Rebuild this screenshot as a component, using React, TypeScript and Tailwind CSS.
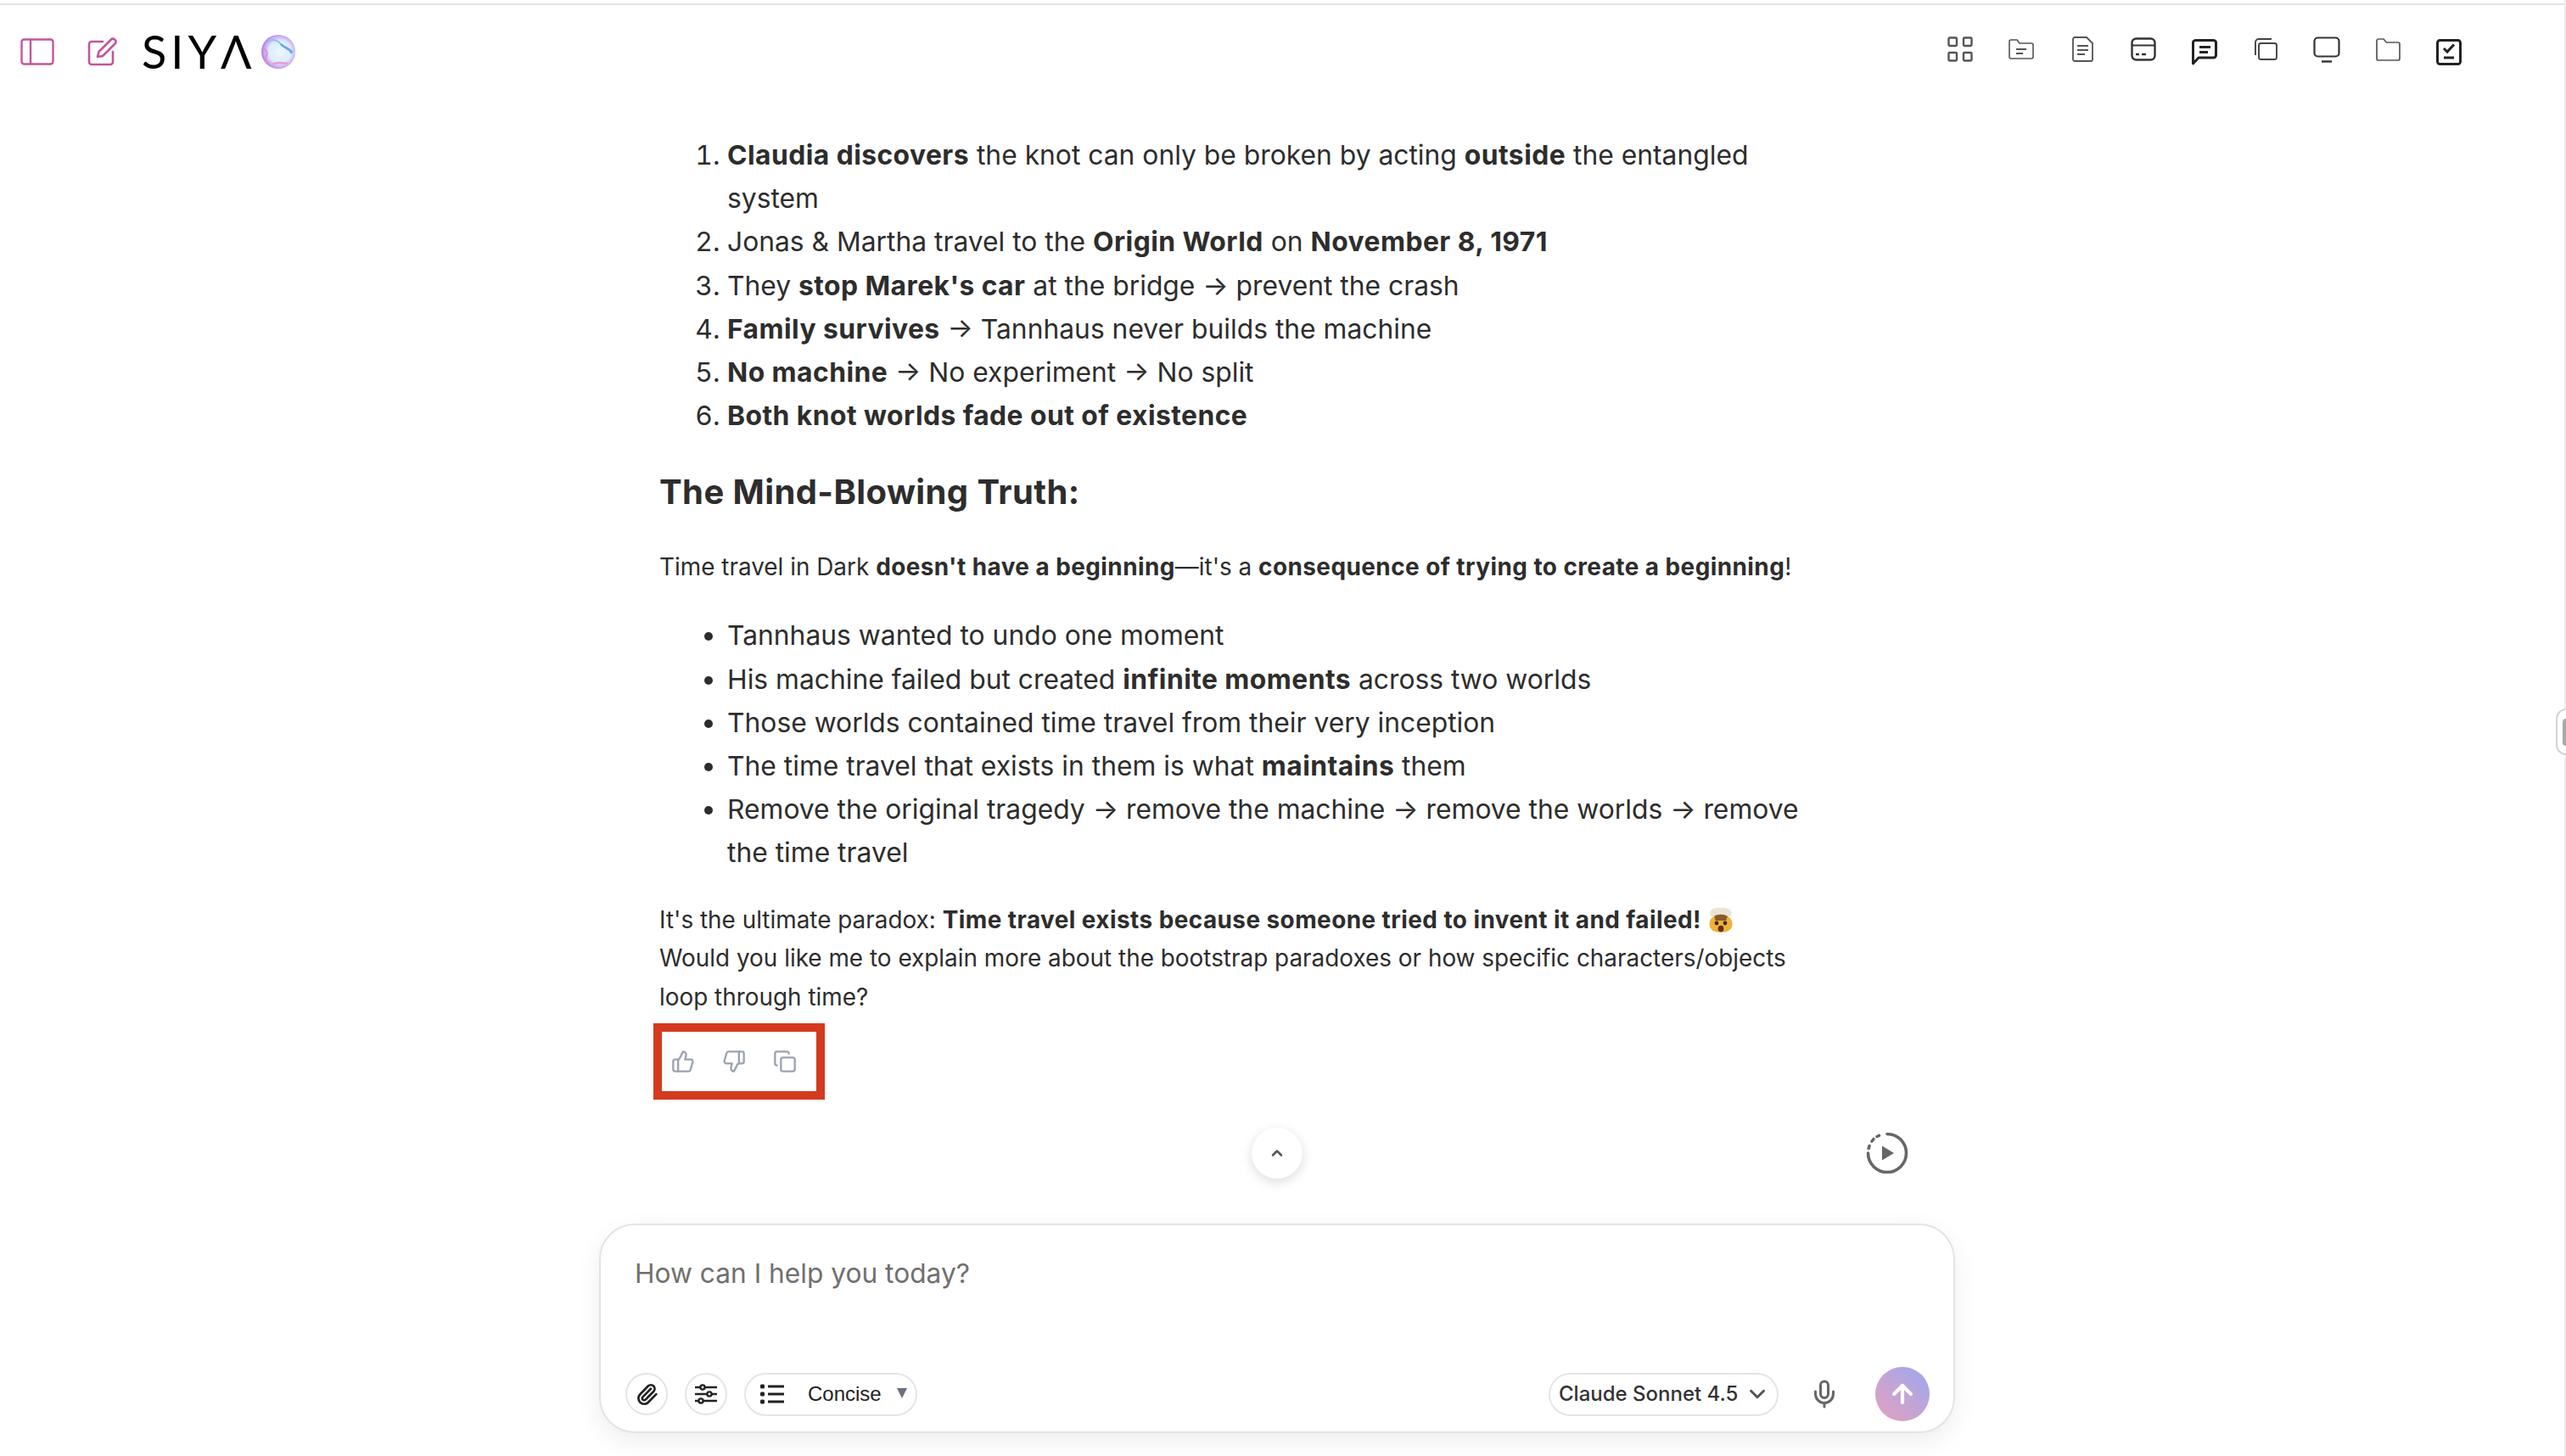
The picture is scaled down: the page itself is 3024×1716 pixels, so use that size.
import React from "react";
import { ThumbsUp, ThumbsDown, Copy, Mic, Paperclip, ArrowUp, ChevronUp, ChevronDown } from "lucide-react";

const SidebarIcon = () => (
  <svg width="40" height="32" viewBox="0 0 40 32" fill="none" stroke="#c2559b" strokeWidth="2.4">
    <rect x="1.5" y="1.5" width="37" height="29" rx="3" />
    <path d="M12 1.5v29" />
  </svg>
);
const EditIcon = () => (
  <svg width="36" height="34" viewBox="0 0 36 34" fill="none" stroke="#c2559b" strokeWidth="2.6" strokeLinejoin="round" strokeLinecap="round">
    <path d="M18 5H5a3 3 0 0 0-3 3v21a3 3 0 0 0 3 3h22a3 3 0 0 0 3-3V17" />
    <path d="M12 23l1.5-6L28 2.5a2.8 2.8 0 0 1 4 0l.8.8a2.8 2.8 0 0 1 0 4L18 22z" />
  </svg>
);
const Orb = () => (
  <svg width="42" height="42" viewBox="0 0 42 42">
    <defs>
      <radialGradient id="orbA" cx="55%" cy="50%" r="55%">
        <stop offset="0%" stopColor="#eef6fd" />
        <stop offset="60%" stopColor="#dcecfb" />
        <stop offset="85%" stopColor="#c9a6f0" />
        <stop offset="100%" stopColor="#a77be8" />
      </radialGradient>
    </defs>
    <circle cx="21" cy="21" r="20" fill="url(#orbA)" />
    <path d="M9 9c6-4 12-1 15 3s9 4 14 9" fill="none" stroke="#8fc3ee" strokeWidth="2" />
    <path d="M3 17c4 1 6 5 4 9s-1 7 3 9" fill="none" stroke="#e58ad0" strokeWidth="2" />
    <path d="M14 36c6-3 11-2 18-1" fill="none" stroke="#ea9ad8" strokeWidth="2.5" />
    <path d="M24 12c4 5 9 3 13 11" fill="none" stroke="#5fa8e6" strokeWidth="2.5" />
  </svg>
);

const GridI = () => (
  <svg width="30" height="30" viewBox="0 0 30 30" fill="none" stroke="#555" strokeWidth="2.4">
    <rect x="1.5" y="1.5" width="9.5" height="9.5" rx="1.2" />
    <rect x="19" y="1.5" width="9.5" height="9.5" rx="1.2" />
    <rect x="1.5" y="19" width="9.5" height="9.5" rx="1.2" />
    <rect x="19" y="19" width="9.5" height="9.5" rx="1.2" />
  </svg>
);
const FolderLinesI = () => (
  <svg width="30" height="24" viewBox="0 0 30 24" fill="none" stroke="#555" strokeWidth="1.6" strokeLinejoin="round">
    <path d="M1 3a2 2 0 0 1 2-2h7l3 4h14a2 2 0 0 1 2 2v14a2 2 0 0 1-2 2H3a2 2 0 0 1-2-2z" />
    <path d="M9 12h12M9 17h8" strokeWidth="1.8" />
  </svg>
);
const DocI = () => (
  <svg width="25" height="30" viewBox="0 0 25 30" fill="none" stroke="#555" strokeWidth="1.8" strokeLinejoin="round">
    <path d="M1 3a2 2 0 0 1 2-2h14l7 7v19a2 2 0 0 1-2 2H3a2 2 0 0 1-2-2z" />
    <path d="M6 11h13M6 16h13M6 21h9" strokeWidth="2" />
  </svg>
);
const CardI = () => (
  <svg width="30" height="28" viewBox="0 0 30 28" fill="none" stroke="#333" strokeWidth="2.4">
    <rect x="1.5" y="1.5" width="27" height="25" rx="5" />
    <path d="M1.5 9.5h27" strokeWidth="2" />
    <path d="M6 20h4M13 20h5" strokeWidth="2.6" />
  </svg>
);
const ChatI = () => (
  <svg width="30" height="31" viewBox="0 0 30 31" fill="none" stroke="#222" strokeWidth="3" strokeLinejoin="round" className="mt-[6px]">
    <path d="M1.500 29V5a3 3 0 0 1 3-3.500h21a3 3 0 0 1 3 3.500v14a3 3 0 0 1-3 3H8z" />
    <path d="M9 9.500h13M9 15.500h10" strokeWidth="3" />
  </svg>
);
const StackI = () => (
  <svg width="28" height="26" viewBox="0 0 28 26" fill="none" stroke="#444" strokeWidth="1.9">
    <rect x="6" y="6" width="21" height="19" rx="2.5" />
    <path d="M2 20V5a4 4 0 0 1 4-4h15" />
  </svg>
);
const MonitorI = () => (
  <svg width="32" height="31" viewBox="0 0 32 31" fill="none" stroke="#333" strokeWidth="2.2">
    <rect x="1.5" y="1.5" width="29" height="22" rx="4" />
    <path d="M10 29.5h12" strokeWidth="2.4" />
  </svg>
);
const FolderI = () => (
  <svg width="29" height="27" viewBox="0 0 29 27" fill="none" stroke="#555" strokeWidth="1.7" strokeLinejoin="round">
    <path d="M1 3a2 2 0 0 1 2-2h6l3.5 4H26a2 2 0 0 1 2 2v17a2 2 0 0 1-2 2H3a2 2 0 0 1-2-2z" />
  </svg>
);
const CheckI = () => (
  <svg width="30" height="31" viewBox="0 0 30 31" fill="none" stroke="#222" strokeWidth="3" className="mt-[6px]">
    <rect x="1.5" y="1.5" width="27" height="28" rx="3" />
    <path d="M9 11l4 4 8-8.5" />
    <path d="M9 22h12" />
  </svg>
);

const PlayCircle = () => (
  <svg width="50" height="50" viewBox="0 0 50 50" fill="none" stroke="#666" strokeWidth="3.6" strokeLinecap="round">
    <path d="M25 2.5A22.5 22.5 0 1 1 2.5 25" />
    <path d="M3.2 19.5l.9-3M7 11l2-2.5M13 5.5l2.5-1.2" />
    <path d="M19 16.5v17l14-8.5z" fill="#666" stroke="none" />
  </svg>
);

const Sliders = () => (
  <svg width="26" height="24" viewBox="0 0 26 24" fill="none" stroke="#222" strokeWidth="2.4">
    <path d="M0 4h6M12 4h14M0 12h14M20 12h6M0 20h4M10 20h16" />
    <circle cx="9" cy="4" r="2.6" />
    <circle cx="17" cy="12" r="2.6" />
    <circle cx="7" cy="20" r="2.6" />
  </svg>
);
const ListI = () => (
  <svg width="28" height="24" viewBox="0 0 28 24" fill="#222">
    <rect x="0" y="0.5" width="5" height="5" rx="1.5" />
    <rect x="0" y="9.5" width="5" height="5" rx="1.5" />
    <rect x="0" y="18.5" width="5" height="5" rx="1.5" />
    <rect x="9" y="1.5" width="19" height="3" rx="0.5" />
    <rect x="9" y="10.5" width="19" height="3" rx="0.5" />
    <rect x="9" y="19.5" width="19" height="3" rx="0.5" />
  </svg>
);
const Emoji = () => (
  <svg width="28" height="30" viewBox="0 0 28 30" className="inline-block align-[-5px] ml-[9px]">
    <path d="M14 9c8 0 13.5 4.5 13.5 11S22 30 14 30 .5 26.500.5 20 6 9 14 9z" fill="#f2b13a" />
    <path d="M2 10C-1 4 6 0 14 1c8-1 15 3 12 9-4 4-20 4-24 0z" fill="#ebe4d4" />
    <path d="M6 11c4-3 12-3 16 0l-2 5H8z" fill="#8a5a2b" />
    <circle cx="9" cy="19" r="2.4" fill="#3b2a1a" />
    <circle cx="19" cy="19" r="2.4" fill="#3b2a1a" />
    <ellipse cx="14" cy="25.500" rx="3.400" ry="3.800" fill="#5b3518" />
  </svg>
);

const ICONS = [GridI, FolderLinesI, DocI, CardI, ChatI, StackI, MonitorI, FolderI, CheckI];

const B = ({ children }: { children: React.ReactNode }) => (
  <b className="font-bold tracking-[0.45px]">{children}</b>
);

export default function App() {
  return (
    <div
      className="relative flex flex-col w-[3024px] h-[1716px] bg-white overflow-hidden text-[#2d2d2d]"
      style={{ fontFamily: "Inter, 'Liberation Sans', sans-serif" }}
    >
      <div className="mt-[4px] h-[2px] bg-[#e3e3e3] shrink-0" />

      <header className="flex items-center h-[110px] shrink-0">
        <div className="flex items-center pl-[24px]">
          <SidebarIcon />
          <div className="ml-[39px]"><EditIcon /></div>
          <span className="ml-[28px] text-[54px] leading-none tracking-[5px] font-normal text-black" style={{ fontFamily: "Lato, sans-serif" }}>SIYΛ</span>
          <div className="ml-[5px]"><Orb /></div>
        </div>
        <div className="ml-auto mr-[102px] mb-[6px] flex items-center">
          {ICONS.map((I, i) => (
            <div key={i} className="flex items-center justify-center w-[72px] h-[40px]"><I /></div>
          ))}
        </div>
      </header>

      <main className="flex-1 flex flex-col w-[3010px]">
        <div className="ml-[777px] w-[1368px] flex-1">
          <ol className="list-decimal pl-[80px] pt-[41px] text-[31.8px] leading-[51.2px]">
            <li><B>Claudia discovers</B> the knot can only be broken by acting <B>outside</B> the entangled system</li>
            <li>Jonas &amp; Martha travel to the <B>Origin World</B> on <B>November 8, 1971</B></li>
            <li>They <B>stop Marek's car</B> at the bridge → prevent the crash</li>
            <li><B>Family survives</B> → Tannhaus never builds the machine</li>
            <li><B>No machine</B> → No experiment → No split</li>
            <li><B>Both knot worlds fade out of existence</B></li>
          </ol>
          <h2 className="mt-[39px] text-[40px] leading-[52px] font-bold tracking-[0.4px]">The Mind-Blowing Truth:</h2>
          <p className="mt-[40px] text-[27.9px] leading-[45px]">Time travel in Dark <B>doesn't have a beginning</B>—it's a <B>consequence of trying to create a beginning</B>!</p>
          <ul className="list-disc pl-[80px] mt-[32px] text-[31.8px] leading-[51.2px]">
            <li>Tannhaus wanted to undo one moment</li>
            <li>His machine failed but created <B>infinite moments</B> across two worlds</li>
            <li>Those worlds contained time travel from their very inception</li>
            <li>The time travel that exists in them is what <B>maintains</B> them</li>
            <li>Remove the original tragedy → remove the machine → remove the worlds → remove the time travel</li>
          </ul>
          <p className="mt-[31px] text-[27.9px] leading-[45.5px]">
            It's the ultimate paradox: <B>Time travel exists because someone tried to invent it and failed!</B><Emoji /><br />
            Would you like me to explain more about the bootstrap paradoxes or how specific characters/objects loop through time?
          </p>
          <div className="mt-[8px] -ml-[7px] flex items-center w-[202px] h-[90px] border-[10px] border-[#d43a1e] pl-[11px] gap-[32px] text-[#9ca3af]">
            <ThumbsUp size={28} strokeWidth={2} />
            <ThumbsDown size={28} strokeWidth={2} />
            <Copy size={28} strokeWidth={2} />
          </div>
        </div>

        <div className="grid grid-cols-[1fr_60px_1fr] items-center w-[3010px] h-[60px] mb-[53px] shrink-0">
          <div />
          <div className="flex items-center justify-center w-[60px] h-[60px] rounded-full bg-white shadow-[0_4px_14px_rgba(0,0,0,0.14)] text-[#555]">
            <ChevronUp size={20} strokeWidth={3} />
          </div>
          <div className="flex justify-start pl-[664px]"><PlayCircle /></div>
        </div>

        <div className="self-center w-[1598px] h-[247px] mb-[27px] shrink-0 flex flex-col justify-between rounded-[42px] border-2 border-[#e4e4e4] bg-white shadow-[0_10px_30px_rgba(0,0,0,0.07)]">
          <div className="pl-[40px] pt-[35px] text-[31.7px] leading-[44px] text-[#707070]">How can I help you today?</div>
          <div className="flex items-center pl-[29px] pr-[28px] pb-[12px]">
            <div className="flex items-center justify-center w-[50px] h-[50px] rounded-full border-2 border-[#e5e5e5] text-[#222]"><Paperclip size={27} strokeWidth={2.4} /></div>
            <div className="ml-[20px] flex items-center justify-center w-[50px] h-[50px] rounded-full border-2 border-[#e5e5e5]"><Sliders /></div>
            <div className="ml-[20px] relative flex items-center w-[204px] h-[51px] rounded-full border-2 border-[#e5e5e5] pl-[17px]">
              <ListI />
              <span className="ml-[28px] text-[24px] text-[#222]" style={{ fontFamily: "'Liberation Sans', sans-serif" }}>Concise</span>
              <svg width="12" height="12" viewBox="0 0 12 12" className="ml-[18px] mb-[3px]"><path d="M0 0h12L6 12z" fill="#6b7080" /></svg>
            </div>
            <div className="ml-auto flex items-center w-[271px] h-[51px] rounded-full border-2 border-[#e5e5e5] pl-[10px]">
              <span className="whitespace-nowrap text-[24px] font-medium text-[#333]">Claude Sonnet 4.5</span>
              <ChevronDown size={30} strokeWidth={2.4} className="ml-[8px] shrink-0 text-[#555]" />
            </div>
            <Mic size={36} strokeWidth={2} className="ml-[36px] text-[#666]" />
            <div className="ml-[42px] flex items-center justify-center w-[64px] h-[64px] rounded-full bg-gradient-to-tr from-[#e5a0bd] to-[#9aa6ee]">
              <ArrowUp size={34} strokeWidth={3} className="text-white" />
            </div>
          </div>
        </div>
      </main>

      <div className="absolute right-0 top-0 bottom-0 w-[2px] bg-[#ececf0]" />
      <div className="absolute right-0 top-[835px] w-[12px] h-[55px] rounded-l-[14px] border-2 border-r-0 border-[#d4d4d4] bg-white">
        <div className="absolute right-0 top-[10px] w-[4px] h-[32px] rounded-l bg-[#a8a8a8]" />
      </div>
    </div>
  );
}
